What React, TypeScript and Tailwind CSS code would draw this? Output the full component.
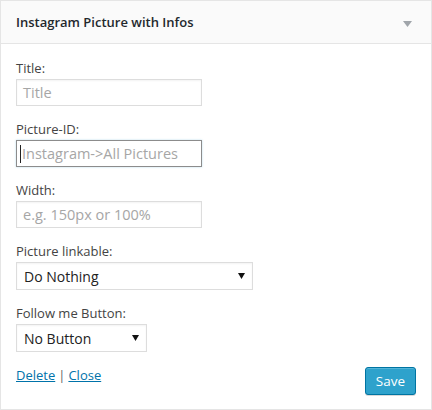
import React from "react";

const font = { fontFamily: '"Open Sans", "Noto Sans", sans-serif' };

function Label({ children }: { children: React.ReactNode }) {
  return <div className="h-[18px] text-[13px] leading-[18px] text-[#444]">{children}</div>;
}

function TextInput({ placeholder, focused }: { placeholder: string; focused?: boolean }) {
  return (
    <div
      className={`mt-[2px] flex h-[27px] w-[186px] items-center border bg-white pl-[6px] text-[14.5px] text-[#a6a6a6] ${
        focused ? "border-[#8c8c8c] shadow-[0_0_2px_rgba(30,140,190,0.3)]" : "border-[#ddd] shadow-[inset_0_1px_2px_rgba(0,0,0,0.05)]"
      }`}
    >
      {focused && <span className="mr-[1px] -ml-[3px] inline-block h-[18px] w-px bg-[#222]" />}
      <span>{placeholder}</span>
    </div>
  );
}

function Select({ value, width }: { value: string; width: string }) {
  return (
    <div
      className={`mt-[2px] flex h-[28px] ${width} items-center justify-between border border-[#ddd] bg-white pl-[7px] pr-[7px] text-[14px] text-[#222] shadow-[inset_0_1px_2px_rgba(0,0,0,0.05)]`}
    >
      <span>{value}</span>
      <svg width="7" height="6" viewBox="0 0 7 6">
        <path d="M0 0 H7 L3.5 6 Z" fill="#111" />
      </svg>
    </div>
  );
}

export default function App() {
  return (
    <div style={font} className="h-[410px] w-[432px] bg-white">
      <div className="flex h-[410px] flex-col border border-[#e5e5e5] bg-white">
        <div className="flex h-[43px] items-center justify-between border-b border-[#e5e5e5] bg-[#fafafa] pl-[15px] pr-[15px]">
          <span className="mt-[2px] text-[13px] font-semibold text-[#23282d]">Instagram Picture with Infos</span>
          <svg width="9" height="6" viewBox="0 0 9 6" className="mr-[4px] mt-[4px]">
            <path d="M0 0 H9 L4.5 6 Z" fill="#a0a5aa" />
          </svg>
        </div>
        <div className="flex flex-col px-[15px] pt-[15px]">
          <Label>Title:</Label>
          <TextInput placeholder="Title" />
          <div className="mt-[14px]">
            <Label>Picture-ID:</Label>
            <TextInput placeholder="Instagram->All Pictures" focused />
          </div>
          <div className="mt-[14px]">
            <Label>Width:</Label>
            <TextInput placeholder="e.g. 150px or 100%" />
          </div>
          <div className="mt-[14px]">
            <Label>Picture linkable:</Label>
            <Select value="Do Nothing" width="w-[237px]" />
          </div>
          <div className="mt-[14px]">
            <Label>Follow me Button:</Label>
            <Select value="No Button" width="w-[131px]" />
          </div>
          <div className="mt-[15px] flex items-start justify-between">
            <div className="-mt-[1px] text-[13px] leading-[18px] text-[#666]">
              <a href="#" className="text-[#0073aa] underline">Delete</a>
              <span className="mx-[3px]">|</span>
              <a href="#" className="text-[#0073aa] underline">Close</a>
            </div>
            <button className="h-[28px] rounded-[3px] border border-[#0074a2] bg-[#2ea2cc] px-[10px] text-[13.5px] text-white shadow-[inset_0_1px_0_rgba(120,200,230,0.5),0_1px_0_rgba(0,0,0,0.15)]">
              Save
            </button>
          </div>
        </div>
      </div>
    </div>
  );
}
